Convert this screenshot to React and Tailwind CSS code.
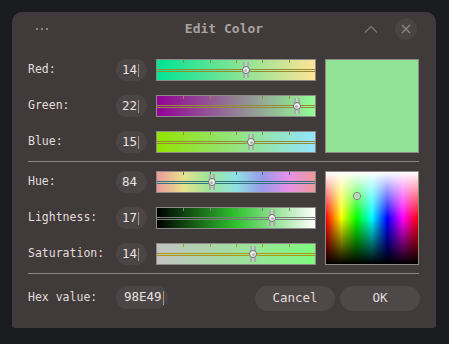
import React from 'react';

const ticks = [1, 2, 3, 4, 5];

function Slider({ bg, tick, track, pos }) {
    return (
        <div className={`relative h-[22px] w-[160px] border border-[#8f8a8a] ${bg}`}>
            {ticks.map(k => (
                <div key={k} className={`absolute top-0 h-[3px] w-px ${tick}`} style={{ left: `${(k / 6) * 100}%` }} />
            ))}
            <div className={`absolute inset-x-0 top-[9px] h-[3px] border-y ${track}`} />
            <div className="absolute top-[2px] h-[16px] w-[5px] -translate-x-1/2 border-x border-[#8c948c] bg-[#c4ccc4]/80" style={{ left: `${pos}%` }} />
            <div className="absolute top-[6px] flex h-[8px] w-[8px] -translate-x-1/2 items-center justify-center rounded-full border border-[#707070] bg-[#f2f2f2]" style={{ left: `${pos}%` }}>
                <div className="h-[3px] w-[3px] rounded-full bg-[#b4b4b4]" />
            </div>
        </div>
    );
}

function Row({ label, value, caret, children }) {
    return (
        <div className="flex h-[22px] items-center">
            <div className="w-[88px] text-[11.5px] text-[#e4dcdc]">{label}</div>
            <div className="mr-[9px] flex h-[22px] w-[31px] items-center justify-end rounded-full bg-[#4b4545] pr-[8px] text-[12.5px] text-[#e8e2e2]">
                <span>{value}</span>
                <span className={`ml-px h-[13px] w-px ${caret ? 'bg-[#9a9494]' : 'bg-transparent'}`} />
            </div>
            {children}
        </div>
    );
}

export default function App() {
    return (
        <div className='min-h-screen bg-[#1b1c1f] p-3 font-["DejaVu_Sans_Mono",monospace]'>
            <div className="flex h-[316px] w-[424px] flex-col rounded-t-[10px] rounded-b-[3px] bg-[#403a3a]">
                <div className="relative flex h-[34px] items-center justify-center">
                    <div className="absolute left-[24px] top-[16px] flex gap-[3px]">
                        <div className="h-[2px] w-[2px] bg-[#8a8484]" />
                        <div className="h-[2px] w-[2px] bg-[#8a8484]" />
                        <div className="h-[2px] w-[2px] bg-[#8a8484]" />
                    </div>
                    <div className="text-[13px] font-bold text-[#aaa2a2]">Edit Color</div>
                    <svg className="absolute left-[351px] top-[12px]" width="16" height="10" viewBox="0 0 16 10">
                        <path d="M2 8.5 L8 2.5 L14 8.5" fill="none" stroke="#7c7676" strokeWidth="1.3" />
                    </svg>
                    <div className="absolute left-[383px] top-[6px] flex h-[22px] w-[22px] items-center justify-center rounded-full bg-[#4a4444]">
                        <svg width="10" height="10" viewBox="0 0 10 10">
                            <path d="M1 1 L9 9 M9 1 L1 9" stroke="#8c8686" strokeWidth="1.3" />
                        </svg>
                    </div>
                </div>

                <div className="flex flex-col px-4 pt-[13px]">
                    <div className="flex gap-[9px]">
                        <div className="flex w-[288px] flex-col gap-[14px]">
                            <Row label="Red:" value="14" caret>
                                <Slider bg="bg-[linear-gradient(to_right,#00e496,#ffe496)]" tick="bg-[#a08c2c]" track="border-[#968a34]" pos={56.3} />
                            </Row>
                            <Row label="Green:" value="22" caret>
                                <Slider bg="bg-[linear-gradient(to_right,#930096,#93ff96)]" tick="bg-[#a08c2c]" track="border-[#968a34]" pos={88.6} />
                            </Row>
                            <Row label="Blue:" value="15" caret>
                                <Slider bg="bg-[linear-gradient(to_right,#93e400,#93e4ff)]" tick="bg-[#a08c2c]" track="border-[#968a34]" pos={59.5} />
                            </Row>
                        </div>
                        <div className="h-[94px] w-[94px] border border-[#8f8a8a] bg-[#92e396]" />
                    </div>

                    <div className="mt-2 h-px w-[391px] bg-[#8a8484]" />

                    <div className="mt-[9px] flex gap-[9px]">
                        <div className="flex w-[288px] flex-col gap-[14px]">
                            <Row label="Hue:" value="84">
                                <Slider bg="bg-[linear-gradient(to_right,#eb9a9a,#e8e28c_16.7%,#9ee49c_33.3%,#8ee2e2_50%,#9a9aea_66.7%,#e890e6_83.3%,#eb9a9a)]" tick="bg-[#2c7484]" track="border-[#2e7482]" pos={34.8} />
                            </Row>
                            <Row label="Lightness:" value="17" caret>
                                <Slider bg="bg-[linear-gradient(to_right,#000000,#2ec42e_50%,#ffffff)]" tick="bg-[#808080]" track="border-[#7c7c7c]" pos={72.8} />
                            </Row>
                            <Row label="Saturation:" value="14" caret>
                                <Slider bg="bg-[linear-gradient(to_right,#c2c2c2,#7efa7e)]" tick="bg-[#b09a10]" track="border-[#ac9612]" pos={60.8} />
                            </Row>
                        </div>
                        <div className="relative h-[94px] w-[94px] border border-[#8f8a8a] bg-[linear-gradient(to_bottom,#ffffff,rgba(255,255,255,0)_50%,rgba(0,0,0,0)_50%,#000000),linear-gradient(to_right,#ff0000,#ffff00_16.7%,#00ff00_33.3%,#00ffff_50%,#0000ff_66.7%,#ff00ff_83.3%,#ff0000)]">
                            <div className="absolute left-[27px] top-[20px] flex h-[8px] w-[8px] items-center justify-center rounded-full border border-[#707070] bg-[#f0f0f0]">
                                <div className="h-[4px] w-[4px] rounded-full bg-[#92e396]" />
                            </div>
                        </div>
                    </div>

                    <div className="mt-2 h-px w-[391px] bg-[#8a8484]" />

                    <div className="mt-3 flex items-start">
                        <div className="flex h-[23px] w-[88px] items-center text-[11.5px] text-[#e4dcdc]">Hex value:</div>
                        <div className="flex h-[23px] w-[52px] items-center rounded-full bg-[#4b4545] pl-[8px] text-[12.5px] text-[#e8e2e2]">
                            <span>98E49</span>
                            <span className="ml-px h-[14px] w-px bg-[#9a9494]" />
                        </div>
                        <div className="ml-auto flex gap-[5px]">
                            <button className="h-[25px] w-[80px] rounded-full bg-[#4f4848] text-[12.5px] text-[#e4dede]">Cancel</button>
                            <button className="h-[25px] w-[80px] rounded-full bg-[#4f4848] text-[12.5px] text-[#e4dede]">OK</button>
                        </div>
                    </div>
                </div>
            </div>
        </div>
    );
}
